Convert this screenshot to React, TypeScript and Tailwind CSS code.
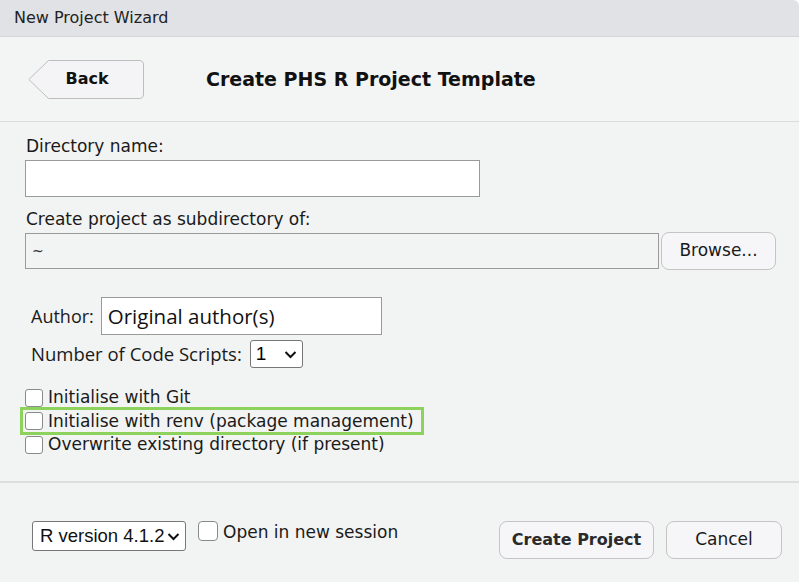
import React, { useState } from 'react';

const font = { fontFamily: '"DejaVu Sans", "Liberation Sans", sans-serif' };
const uiFont = { fontFamily: '"Open Sans", "Liberation Sans", sans-serif' };
const arialFont = { fontFamily: '"Liberation Sans", Arial, sans-serif' };

const Check: React.FC<{ label: string; checked?: boolean; onToggle?: () => void }> = ({ label, checked, onToggle }) => (
  <label className="flex items-center h-[23.5px] cursor-pointer" onClick={onToggle}>
    <span className="w-[18px] h-[18px] rounded-[3px] border border-[#8a8a8a] bg-white flex items-center justify-center">
      {checked && <span className="text-[12px] leading-none">✓</span>}
    </span>
    <span className="ml-[5px] text-[17px] text-[#1a1a1a] whitespace-nowrap">{label}</span>
  </label>
);

const Chevron: React.FC = () => (
  <svg width="13" height="9" viewBox="0 0 13 9" className="ml-auto shrink-0">
    <path d="M1.5 2 L6.5 7 L11.5 2" fill="none" stroke="#111" strokeWidth="2" />
  </svg>
);

const App: React.FC = () => {
  const [git, setGit] = useState(false);
  const [renv, setRenv] = useState(false);
  const [overwrite, setOverwrite] = useState(false);
  const [newSession, setNewSession] = useState(false);

  return (
    <div className="w-[802px] h-[582px] bg-white" style={font}>
      <div className="w-[799px] h-[582px] bg-[#f2f3f3] flex flex-col rounded-tr-[6px] overflow-hidden">
        {/* title bar */}
        <div className="h-[37px] bg-[#e1e2e6] border-b border-[#d3d5d8] flex items-center pl-[14px] text-[16px] text-[#222]">
          New Project Wizard
        </div>

        {/* header */}
        <div className="h-[85px] bg-[#f3f4f4] border-b border-[#dcdcdc] flex items-center pl-[28px]">
          <div className="relative w-[116px] h-[39px] flex items-center justify-center">
            <svg width="116" height="39" viewBox="0 0 116 39" className="absolute inset-0">
              <path d="M20.5 0.5 H111 Q115.5 0.5 115.5 5 V34 Q115.5 38.5 111 38.5 H20.5 L0.8 19.5 Z" fill="#f4f4f6" stroke="#bdbdbd" />
            </svg>
            <span className="relative ml-[2px] font-bold text-[16px] text-[#111]">Back</span>
          </div>
          <div className="ml-[62px] font-bold text-[19px] text-[#111]">Create PHS R Project Template</div>
        </div>

        {/* body */}
        <div className="flex-1 flex flex-col pl-[25px] pt-[13px]">
          <div className="text-[17px] text-[#1a1a1a] leading-[22px] pl-[1px]">Directory name:</div>
          <div className="mt-[3px] w-[455px] h-[37px] bg-white border border-[#9a9a9a]" />
          <div className="mt-[11px] text-[17px] text-[#1a1a1a] leading-[22px] pl-[1px]">Create project as subdirectory of:</div>
          <div className="mt-[2px] flex items-center">
            <div className="w-[634px] h-[36px] border border-[#9a9a9a] flex items-center pl-[6px] text-[14px] text-[#333]">~</div>
            <button className="ml-[2px] w-[115px] h-[38px] rounded-[8px] border border-[#c4c4c4] bg-[#f6f6f8] text-[17px] text-[#1a1a1a]" style={font}>
              Browse...
            </button>
          </div>

          <div className="mt-[27px] pl-[6px] flex items-center">
            <span className="text-[18px] text-[#1a1a1a]" style={uiFont}>Author:</span>
            <div className="ml-[7px] w-[281px] h-[38px] bg-white border border-[#9a9a9a] flex items-center pl-[6px] text-[20.5px] text-[#111]" style={uiFont}>
              Original author(s)
            </div>
          </div>
          <div className="mt-[5px] pl-[6px] flex items-center">
            <span className="text-[18.5px] text-[#1a1a1a]" style={uiFont}>Number of Code Scripts:</span>
            <div className="ml-[8px] w-[53px] h-[28px] bg-white border border-[#777] rounded-[3px] flex items-center px-[5px] text-[19px]" style={arialFont}>
              1
              <Chevron />
            </div>
          </div>

          <div className="mt-[18px] flex flex-col">
            <Check label="Initialise with Git" checked={git} onToggle={() => setGit(!git)} />
            <div className="relative">
              <span className="absolute -left-[5px] -top-[3px] w-[404px] h-[28px] border-[3px] border-[#8cd25c] pointer-events-none" />
              <Check label="Initialise with renv (package management)" checked={renv} onToggle={() => setRenv(!renv)} />
            </div>
            <Check label="Overwrite existing directory (if present)" checked={overwrite} onToggle={() => setOverwrite(!overwrite)} />
          </div>
        </div>

        {/* footer */}
        <div className="h-[101px] border-t-2 border-[#dedede] flex items-start pt-[38px] pl-[32px] pr-[17px]">
          <div className="w-[154px] h-[30px] bg-white border border-[#777] rounded-[3px] flex items-center pl-[7px] pr-[5px] text-[18.5px] text-[#111] whitespace-nowrap" style={arialFont}>
            R version 4.1.2
            <Chevron />
          </div>
          <label className="ml-[12px] flex items-start cursor-pointer" onClick={() => setNewSession(!newSession)}>
            <span className="w-[20px] h-[20px] rounded-[4px] border border-[#8a8a8a] bg-white" />
            <span className="ml-[5px] -mt-[1px] text-[17px] text-[#1a1a1a]">Open in new session</span>
          </label>
          <div className="ml-auto flex gap-[12px]">
            <button className="w-[155px] h-[38px] rounded-[8px] border border-[#c4c4c4] bg-[#f6f6f8] font-bold text-[16px] text-[#2a2a2a]" style={font}>
              Create Project
            </button>
            <button className="w-[116px] h-[38px] rounded-[8px] border border-[#c4c4c4] bg-[#f6f6f8] text-[17px] text-[#1a1a1a]" style={font}>
              Cancel
            </button>
          </div>
        </div>
      </div>
    </div>
  );
};

export default App;
